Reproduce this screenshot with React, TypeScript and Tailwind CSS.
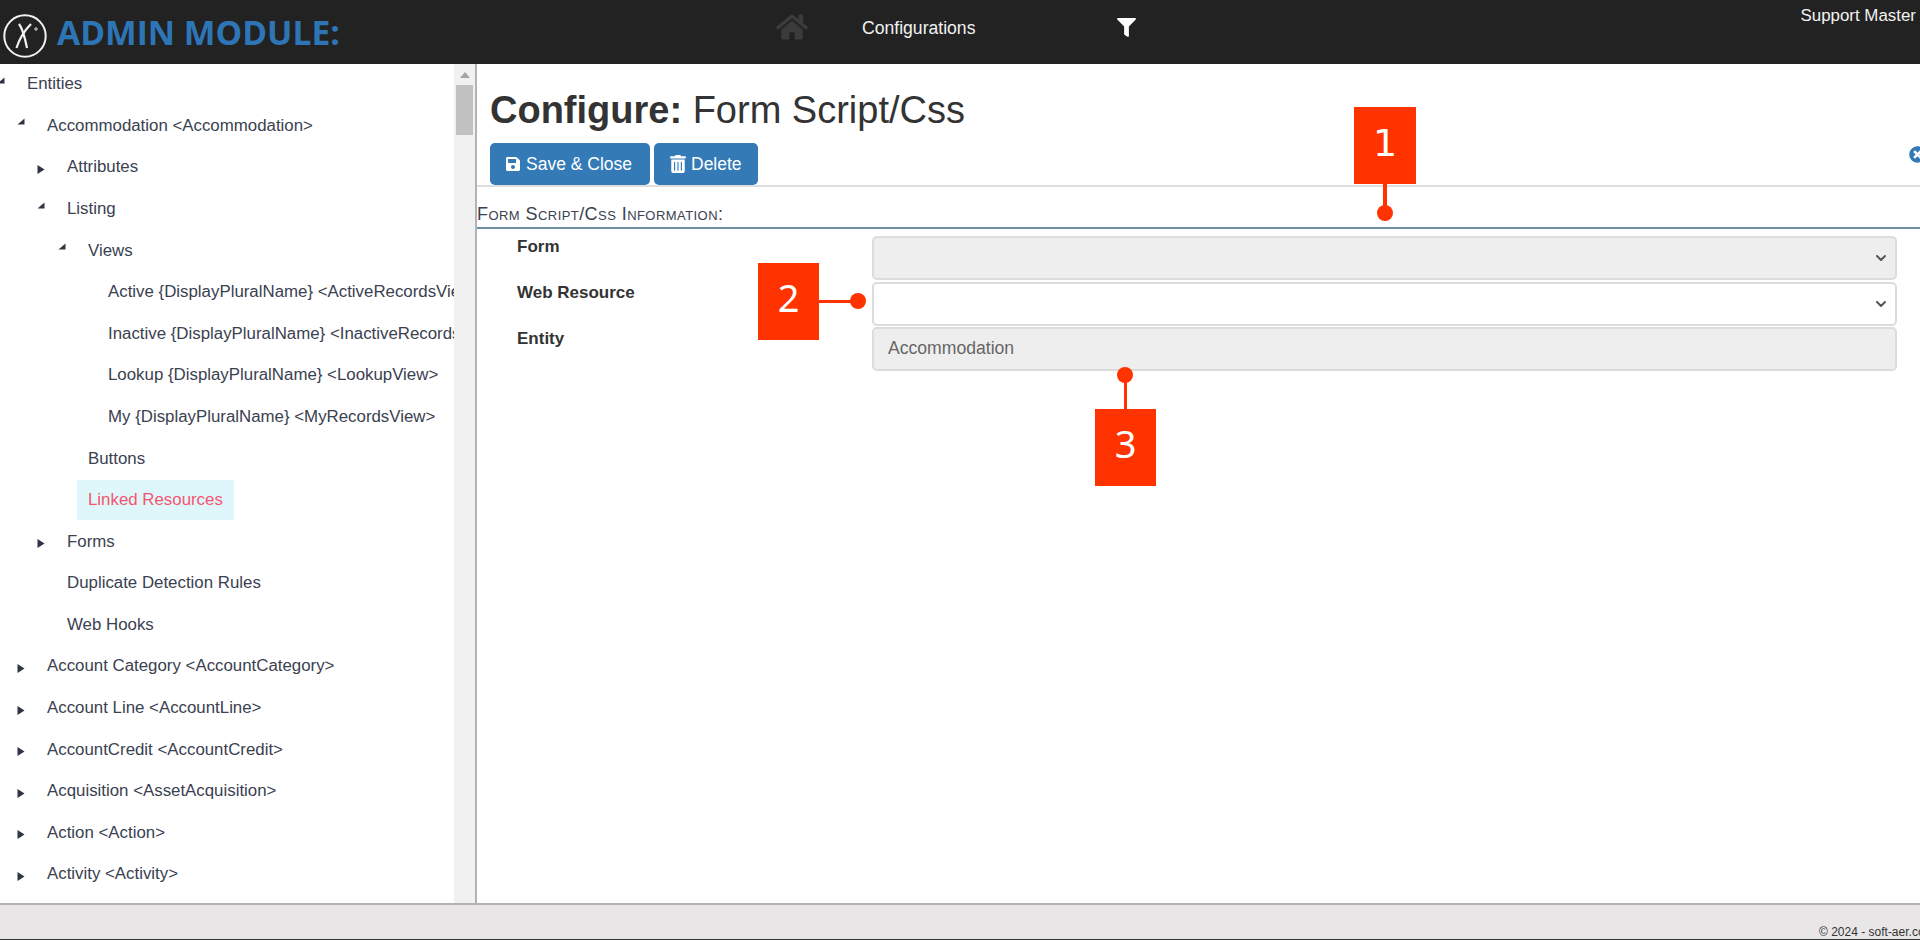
import React from "react";
import { FaHome, FaFilter, FaSave, FaTrashAlt, FaTimesCircle } from "react-icons/fa";
import { ChevronDown } from "lucide-react";

type Row = { label: string; level: number; state?: "open" | "closed"; active?: boolean };

const rows: Row[] = [
  { label: "Entities", level: 0, state: "open" },
  { label: "Accommodation <Accommodation>", level: 1, state: "open" },
  { label: "Attributes", level: 2, state: "closed" },
  { label: "Listing", level: 2, state: "open" },
  { label: "Views", level: 3, state: "open" },
  { label: "Active {DisplayPluralName} <ActiveRecordsView>", level: 4 },
  { label: "Inactive {DisplayPluralName} <InactiveRecordsView>", level: 4 },
  { label: "Lookup {DisplayPluralName} <LookupView>", level: 4 },
  { label: "My {DisplayPluralName} <MyRecordsView>", level: 4 },
  { label: "Buttons", level: 3 },
  { label: "Linked Resources", level: 3, active: true },
  { label: "Forms", level: 2, state: "closed" },
  { label: "Duplicate Detection Rules", level: 2 },
  { label: "Web Hooks", level: 2 },
  { label: "Account Category <AccountCategory>", level: 1, state: "closed" },
  { label: "Account Line <AccountLine>", level: 1, state: "closed" },
  { label: "AccountCredit <AccountCredit>", level: 1, state: "closed" },
  { label: "Acquisition <AssetAcquisition>", level: 1, state: "closed" },
  { label: "Action <Action>", level: 1, state: "closed" },
  { label: "Activity <Activity>", level: 1, state: "closed" },
];

const indent = ["-ml-[3px]", "ml-[17px]", "ml-[37px]", "ml-[58px]", "ml-[78px]"];

function Arrow({ state }: { state?: "open" | "closed" }) {
  return (
    <span className="w-[8px] h-[12px] mr-[22px] shrink-0">
      {state === "open" && (
        <svg width="8" height="12" viewBox="0 0 8 12" className="-mt-[2px]">
          <path d="M0.5 7.5 L7.5 1.5 V7.5 Z" fill="#2f3544" />
        </svg>
      )}
      {state === "closed" && (
        <svg width="8" height="12" viewBox="0 0 8 12" className="mt-[2px]">
          <path d="M0.5 2 L7.5 6.5 L0.5 11 Z" fill="#2f3544" />
        </svg>
      )}
    </span>
  );
}

function TreeRow({ row }: { row: Row }) {
  return (
    <div className="flex items-center h-[41.6px] whitespace-nowrap">
      <div className={`flex items-center ${indent[row.level]}`}>
        <Arrow state={row.state} />
        {row.active ? (
          <span className="-ml-[11px] px-[11px] h-[40px] leading-[40px] bg-[#dff6fb] text-[#f4566f]">{row.label}</span>
        ) : (
          <span>{row.label}</span>
        )}
      </div>
    </div>
  );
}

function Logo() {
  return (
    <svg width="46" height="46" viewBox="0 0 46 46" className="shrink-0 mt-[8px] -ml-[1px]">
      <circle cx="23" cy="23" r="20.7" fill="none" stroke="#f2f2f2" strokeWidth="2" />
      <path d="M17 11 C21 16 23 25 25 35" fill="none" stroke="#f2f2f2" strokeWidth="2.2" />
      <path d="M29 11 C22 18 17 27 14.5 35" fill="none" stroke="#f2f2f2" strokeWidth="2.2" />
      <path d="M32 16 H36 M34 14 V18" stroke="#d9d9d9" strokeWidth="1" />
    </svg>
  );
}

function Callout({ className, n }: { className: string; n: string }) {
  return (
    <div className={`absolute flex items-center justify-center h-[77px] bg-[#ff3300] text-white text-[38px] ${className}`}>
      {n}
    </div>
  );
}

export default function App() {
  return (
    <div className="relative h-[940px] w-[1920px] overflow-hidden bg-white flex flex-col font-['Liberation_Sans',Arial,sans-serif] text-[#333]">
      <header className="h-[64px] shrink-0 bg-[#222222] flex items-start text-white">
        <div className="flex items-center h-[64px] w-[776px] pl-[3px] shrink-0">
          <Logo />
          <span className="ml-[9px] text-[#2e75b6] text-[33.6px] font-bold font-['Open_Sans',sans-serif] whitespace-nowrap">ADMIN MODULE:</span>
        </div>
        <div className="w-[86px] shrink-0 pt-[11px]">
          <FaHome className="text-[#3b3b3b] w-[32px] h-[32px]" />
        </div>
        <div className="w-[255px] shrink-0 pt-[18px] text-[17.6px] leading-[20px] text-[#f2f2f2]">Configurations</div>
        <div className="pt-[18px] shrink-0">
          <FaFilter className="w-[19px] h-[19px] text-white" />
        </div>
        <div className="ml-auto mr-[4px] pt-[6px] text-[16.9px] leading-[20px] text-[#f2f2f2]">Support Master</div>
      </header>

      <div className="flex-1 min-h-0 flex">
        <aside className="w-[477px] shrink-0 flex border-r-2 border-[#b3b3b3]">
          <div className="w-[454px] overflow-hidden text-[16.85px] text-[#3a4150]">
            <div className="-mt-[1px]">
              {rows.map((r) => (
                <TreeRow key={r.label} row={r} />
              ))}
            </div>
          </div>
          <div className="w-[21px] bg-[#f1f1f1] flex flex-col items-center">
            <svg width="10" height="6" viewBox="0 0 10 6" className="mt-[8px]">
              <path d="M0 6 L5 0 L10 6 Z" fill="#a3a3a3" />
            </svg>
            <div className="mt-[7px] w-[17px] h-[50px] bg-[#c1c1c1]" />
          </div>
        </aside>

        <main className="flex-1 min-w-0 overflow-hidden">
          <h1 className="pl-[13px] pt-[25px] text-[38px] leading-[42px] text-[#333] whitespace-nowrap">
            <b>Configure:</b> Form Script/Css
          </h1>
          <div className="relative h-[44px] mt-[12px] border-b-2 border-[#dedede] pl-[13px] flex items-start gap-[4px]">
            <button className="h-[42px] w-[160px] pl-[15px] bg-[#337ab7] rounded-[5px] text-white text-[17.5px] flex items-center gap-[5px]">
              <FaSave className="w-[16px] h-[16px]" />
              Save &amp; Close
            </button>
            <button className="h-[42px] w-[104px] pl-[16px] bg-[#337ab7] rounded-[5px] text-white text-[17.5px] flex items-center gap-[5px]">
              <FaTrashAlt className="w-[16px] h-[18px]" />
              Delete
            </button>
            <FaTimesCircle className="absolute -right-[6px] top-[3px] w-[17px] h-[17px] text-[#337ab7]" />
          </div>
          <div className="mt-[16px] h-[26px] border-b-2 border-[#6f8ea3] text-[18px] leading-[22px] tracking-[0.44px] text-[#3a4150]">
            <span className="[font-variant:small-caps]">Form Script/Css Information:</span>
          </div>
          <div className="mt-[7px] flex flex-col gap-[2px] text-[17px]">
            <FormRow label="Form">
              <Select disabled />
            </FormRow>
            <FormRow label="Web Resource">
              <Select />
            </FormRow>
            <FormRow label="Entity">
              <div className="w-[1025px] h-[44px] -mt-[1px] rounded-[5px] border-2 border-[#dcdcdc] bg-[#eeeeee] px-[14px] pb-[1px] flex items-center text-[17.6px] text-[#666]">
                Accommodation
              </div>
            </FormRow>
          </div>
        </main>
      </div>

      <footer className="h-[37px] shrink-0 bg-[#e8e6e7] border-t-2 border-[#b3b3b3] border-b border-b-[#333] overflow-hidden whitespace-nowrap text-[12px] leading-[14px] pl-[1819px] pt-[20px]">
        © 2024 - soft-aer.com
      </footer>

      <Callout n="1" className="left-[1354px] top-[107px] w-[62px] pb-[5px] text-[36px] font-['DejaVu_Sans',sans-serif]" />
      <div className="absolute left-[1383px] top-[184px] w-[4px] h-[24px] bg-[#ff3300]" />
      <div className="absolute left-[1377px] top-[205px] w-[16px] h-[16px] rounded-full bg-[#ff3300]" />

      <Callout n="2" className="left-[758px] top-[263px] w-[61px] pb-[8px] font-['Noto_Sans',sans-serif]" />
      <div className="absolute left-[819px] top-[300px] w-[32px] h-[3px] bg-[#ff3300]" />
      <div className="absolute left-[850px] top-[293px] w-[16px] h-[16px] rounded-full bg-[#ff3300]" />

      <Callout n="3" className="left-[1095px] top-[409px] w-[61px] pb-[8px] font-['Noto_Sans',sans-serif]" />
      <div className="absolute left-[1124px] top-[376px] w-[3px] h-[33px] bg-[#ff3300]" />
      <div className="absolute left-[1117px] top-[367px] w-[16px] h-[16px] rounded-full bg-[#ff3300]" />
    </div>
  );
}

function FormRow({ label, children }: { label: string; children: React.ReactNode }) {
  return (
    <div className="flex items-start">
      <label className="w-[395px] shrink-0 pl-[40px] pt-[1px] font-bold leading-[20px]">{label}</label>
      {children}
    </div>
  );
}

function Select({ disabled }: { disabled?: boolean }) {
  return (
    <div className={`w-[1025px] h-[44px] rounded-[5px] border-2 border-[#dcdcdc] flex items-center justify-end pr-[6px] ${disabled ? "bg-[#eeeeee]" : "bg-white"}`}>
      <ChevronDown className="w-[16px] h-[16px] text-[#555]" strokeWidth={3} />
    </div>
  );
}
